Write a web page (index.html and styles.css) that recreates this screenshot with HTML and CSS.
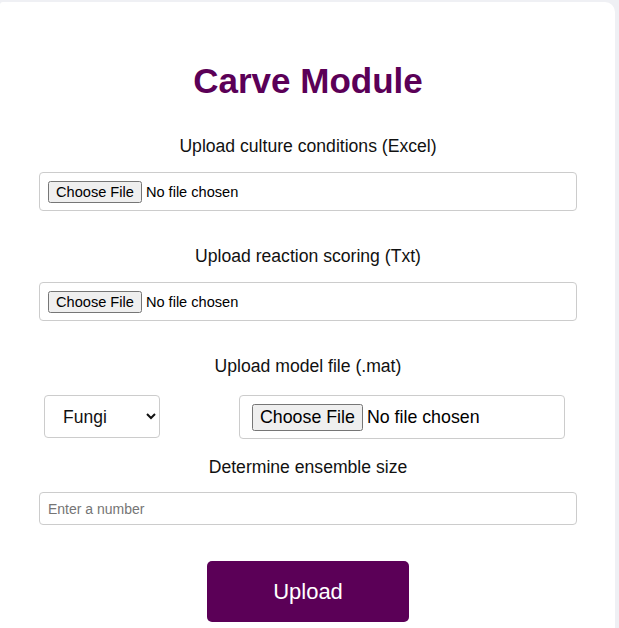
FILE: index.html
```html
<!DOCTYPE html>
<html lang="en">
<head>
<meta charset="utf-8">
<title>Carve Module</title>
<link rel="stylesheet" href="styles.css">
</head>
<body>
<div class="card">
  <h1 class="title">Carve Module</h1>
  <div class="group">
    <label class="label">Upload culture conditions (Excel)</label>
    <div class="box"><input type="file" class="file"></div>
  </div>
  <div class="group">
    <label class="label">Upload reaction scoring (Txt)</label>
    <div class="box"><input type="file" class="file"></div>
  </div>
  <div class="group group-model">
    <label class="label">Upload model file (.mat)</label>
    <div class="row">
      <select class="select">
        <option>Fungi</option>
        <option>Bacteria</option>
      </select>
      <div class="box box-large"><input type="file" class="file file-large"></div>
    </div>
  </div>
  <div class="group group-size">
    <label class="label">Determine ensemble size</label>
    <input type="number" class="number" placeholder="Enter a number">
  </div>
  <div class="actions">
    <button class="upload" type="button">Upload</button>
  </div>
</div>
</body>
</html>
```
FILE: styles.css
```css
html, body {
  margin: 0;
  padding: 0;
}
body {
  background: #eff0f4;
  font-family: "Liberation Sans", Arial, sans-serif;
  color: #111;
  padding-top: 2px;
}
.card {
  box-sizing: border-box;
  width: 615px;
  height: 640px;
  background: #ffffff;
  border-radius: 3px 10px 0 0;
  padding: 59px 38px 0 39px;
  text-align: center;
}
.title {
  margin: 0 0 35px;
  font-size: 35px;
  line-height: 40px;
  font-weight: bold;
  color: #5b0057;
}
.group {
  display: flex;
  flex-direction: column;
  margin-bottom: 35px;
}
.label {
  display: block;
  font-size: 17.6px;
  line-height: 21px;
  margin-bottom: 15px;
  color: #111;
}
.box {
  box-sizing: border-box;
  border: 1px solid #cccccc;
  border-radius: 4px;
  padding: 8px;
  height: 39px;
  text-align: left;
  display: flex;
  align-items: center;
}
.file {
  font-family: "Liberation Sans", Arial, sans-serif;
  font-size: 14.6px;
  color: #000;
}
.group-model .label {
  margin-bottom: 18px;
}
.group-model {
  margin-bottom: 18px;
}
.row {
  display: flex;
  align-items: flex-start;
  gap: 79px;
  padding-left: 5px;
}
.select {
  box-sizing: border-box;
  width: 116px;
  height: 43px;
  padding: 0 10px 0 14px;
  font-family: "Liberation Sans", Arial, sans-serif;
  font-size: 17.5px;
  color: #111;
  background: #fff;
  border: 1px solid #cccccc;
  border-radius: 4px;
}
.box-large {
  width: 326px;
  height: 44px;
  padding: 8px 12px;
}
.file-large {
  font-size: 17.8px;
}
.group-size .label {
  margin-bottom: 14px;
}
.group-size {
  margin-bottom: 36px;
}
.number {
  box-sizing: border-box;
  width: 538px;
  height: 33px;
  padding: 6px 8px;
  font-family: "Liberation Sans", Arial, sans-serif;
  font-size: 14px;
  border: 1px solid #cccccc;
  border-radius: 4px;
}
.number::placeholder {
  color: #757575;
}
.actions {
  display: flex;
  justify-content: center;
}
.upload {
  width: 202px;
  height: 61px;
  background: #5b0057;
  color: #ffffff;
  border: none;
  border-radius: 5px;
  font-family: "Liberation Sans", Arial, sans-serif;
  font-size: 22px;
  cursor: pointer;
}
```
